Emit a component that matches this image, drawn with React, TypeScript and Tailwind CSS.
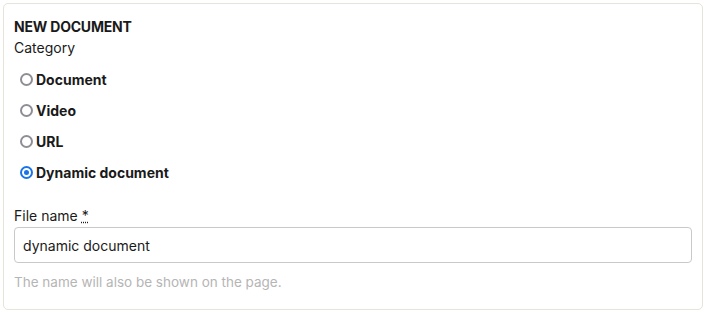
import { useState } from 'react';

const options = ['Document', 'Video', 'URL', 'Dynamic document'];

export default function App() {
  const [selected, setSelected] = useState('Dynamic document');

  return (
    <div className="p-[3px] w-[705px] h-[315px] bg-white" style={{ fontFamily: 'Inter, "Liberation Sans", sans-serif' }}>
      <div className="h-[307px] w-[700px] rounded-[5px] border border-[#e6e4d8] px-[10px] pt-[13px] text-[#1a1a1a]">
        <h2 className="text-[14px] font-bold leading-[20px] tracking-[-0.2px]">NEW DOCUMENT</h2>
        <p className="text-[14px] leading-[20px] mt-[1px]">Category</p>

        <div className="mt-[6px] flex flex-col">
          {options.map(opt => (
            <label key={opt} className="flex items-center h-[31px] pl-[6px] cursor-pointer">
              <span
                className={
                  'w-[13px] h-[13px] rounded-full flex items-center justify-center border-2 ' +
                  (selected === opt ? 'border-[#1a73e8]' : 'border-[#8e8e96]')
                }
                onClick={() => setSelected(opt)}
              >
                {selected === opt && <span className="w-[5px] h-[5px] rounded-full bg-[#1a73e8]" />}
              </span>
              <span className="ml-[3px] text-[14px] font-bold leading-[20px]">{opt}</span>
            </label>
          ))}
        </div>

        <label className="block mt-[18px] text-[14px] leading-[20px]">
          File name <span className="underline decoration-dotted">*</span>
        </label>
        <input
          className="mt-[1px] w-[678px] h-[36px] rounded-[4px] border border-[#c9c9c9] px-[8px] text-[14px] text-[#1a1a1a] outline-none"
          defaultValue="dynamic document"
        />
        <p className="mt-[9px] text-[13.5px] leading-[20px] text-[#b5b5b5]">The name will also be shown on the page.</p>
      </div>
    </div>
  );
}
